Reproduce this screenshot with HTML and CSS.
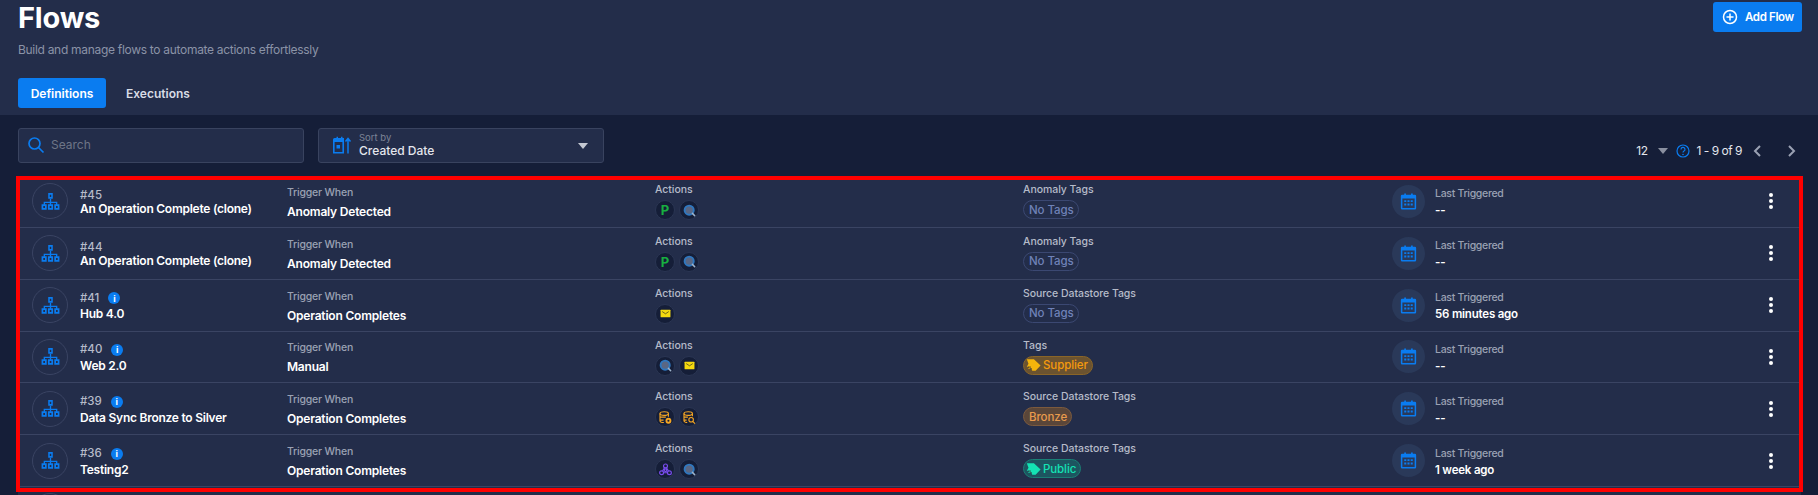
FILE: index.html
```html
<!DOCTYPE html>
<html lang="en">
<head>
    <meta charset="UTF-8">
    <meta name="viewport" content="width=device-width, initial-scale=1.0">
    <title>Flows</title>
    <link rel="stylesheet" href="styles.css">
</head>
<body>
    <svg class="sprites" width="0" height="0" aria-hidden="true">
        <symbol id="i-flow" viewBox="0 0 20 20">
            <path d="M10 7v4M3.500 14v-3h13v3M10 11v3" fill="none" stroke="currentColor" stroke-width="1.400"/>
            <path fill-rule="evenodd" d="M7.600 1h4.800v6H7.600zM9.200 2.800v2.400h1.600V2.800zM0.600 13h5.400v5.600H0.600zM2.400 14.800v2h1.800v-2zM7.300 13h5.400v5.600H7.300zM9.100 14.800v2h1.800v-2zM14 13h5.400v5.600H14zM15.800 14.800v2h1.800v-2z" fill="currentColor"/>
        </symbol>
        <symbol id="i-cal" viewBox="0 0 20 20">
            <path fill-rule="evenodd" d="M5 0.500h2V2h6V0.500h2V2h2.500A1.500 1.500 0 0 1 19 3.500V18a1.500 1.500 0 0 1-1.500 1.500h-15A1.500 1.500 0 0 1 1 18V3.500A1.500 1.500 0 0 1 2.500 2H5zM2.800 6.500V17.700h14.400V6.500z" fill="currentColor"/>
            <path d="M5 8.500h2.400v2.200H5zM8.800 8.500h2.400v2.200H8.800zM12.600 8.500H15v2.200h-2.400zM5 12.400h2.400v2.200H5zM8.800 12.400h2.400v2.200H8.800zM12.600 12.400H15v2.200h-2.400z" fill="currentColor"/>
        </symbol>
        <symbol id="i-lens" viewBox="0 0 20 20">
            <circle cx="9.500" cy="9.500" r="7" fill="#5a6784" stroke="#2f78c0" stroke-width="3"/>
            <path d="M14.500 14.500l3.500 3.500" stroke="#9fb4cc" stroke-width="2.400" stroke-linecap="round"/>
        </symbol>
        <symbol id="i-mail" viewBox="0 0 20 20">
            <rect x="1" y="3" width="18" height="14" rx="1" fill="#f4d90f"/>
            <path d="M4 6.500l6 4 6-4" fill="none" stroke="#3b3a20" stroke-width="1.300"/>
        </symbol>
        <symbol id="i-db-eye" viewBox="0 0 20 20">
            <g fill="none" stroke="#f5a623" stroke-width="1.700">
                <ellipse cx="8" cy="4" rx="6.500" ry="2.800"/>
                <path d="M1.500 4v11c0 1.500 3 2.800 6 2.800M14.500 4v5M1.500 9.500h9M1.500 14h5.500"/>
            </g>
            <circle cx="14.500" cy="15" r="4.500" fill="#f5a623"/>
            <circle cx="14.500" cy="15" r="1.600" fill="#151e38"/>
        </symbol>
        <symbol id="i-db-lens" viewBox="0 0 20 20">
            <g fill="none" stroke="#f5a623" stroke-width="1.700">
                <ellipse cx="8" cy="4" rx="6.500" ry="2.800"/>
                <path d="M1.500 4v11c0 1.500 3 2.800 5 2.800M14.500 4v4M1.500 9.500h6M1.500 14h4"/>
                <circle cx="12.500" cy="13.500" r="3.500"/>
                <path d="M15 16l3.500 3.500"/>
            </g>
        </symbol>
        <symbol id="i-tri" viewBox="0 0 20 20">
            <g fill="none" stroke="#7a4df0" stroke-width="1.800">
                <circle cx="10" cy="4.500" r="3"/>
                <circle cx="4" cy="15" r="3"/>
                <circle cx="16" cy="15" r="3"/>
                <path d="M8.500 7.200L5.500 12.400M11.500 7.200l3 5.200M7 15h6"/>
                <circle cx="10" cy="11" r="2"/>
            </g>
        </symbol>
        <symbol id="i-tag" viewBox="1 2 18 16">
            <path d="M2 3h8.500l8 7.500-6 6.500H8.500l-1-2.500H3.500l1.500-2.500H2l2-3.500-2-5.500z" fill="currentColor"/>
            <path d="M3.500 12.500h3.500M5.500 14.500H8" stroke="#3a3a3a" stroke-width="1"/>
        </symbol>
    </svg>

    <header class="top">
        <div class="top-head">
            <div>
                <h1>Flows</h1>
                <p class="sub">Build and manage flows to automate actions effortlessly</p>
            </div>
            <button class="add-btn">
                <svg width="16" height="16" viewBox="0 0 16 16"><circle cx="8" cy="8" r="6.500" fill="none" stroke="#fff" stroke-width="1.500"/><path d="M8 4.500v7M4.500 8h7" stroke="#fff" stroke-width="1.500"/></svg>
                Add Flow
            </button>
        </div>
        <nav class="tabs">
            <a class="tab active">Definitions</a>
            <a class="tab">Executions</a>
        </nav>
    </header>

    <main class="content">
        <div class="toolbar">
            <div class="field search">
                <svg width="18" height="18" viewBox="0 0 18 18"><circle cx="7.500" cy="7.500" r="5.500" fill="none" stroke="#0a7cf0" stroke-width="1.700"/><path d="M11.500 11.500l5 5" stroke="#0a7cf0" stroke-width="1.700"/></svg>
                <span class="placeholder">Search</span>
            </div>
            <div class="field sort">
                <svg width="20" height="20" viewBox="0 0 20 20"><path fill-rule="evenodd" d="M3 2h1.500V.8h1.500V2h3V.8h1.500V2H12v15.500H1V3.500A1.500 1.500 0 0 1 2.500 2zM2.600 6v10h7.800V6z" fill="#0a7cf0"/><path d="M4.500 9h3.500v3.500H4.500z" fill="#0a7cf0"/><path d="M16 17.500V3M13.500 5.500L16 2.500l2.500 3" fill="none" stroke="#0a7cf0" stroke-width="1.500"/></svg>
                <div class="sort-text">
                    <span class="sort-label">Sort by</span>
                    <span class="sort-value">Created Date</span>
                </div>
                <span class="caret"></span>
            </div>
            <div class="pager">
                <span>12</span>
                <span class="caret small"></span>
                <svg class="help" width="14" height="14" viewBox="0 0 14 14"><circle cx="7" cy="7" r="6" fill="none" stroke="#0a7cf0" stroke-width="1.200"/><path d="M5 5.400a2 2 0 1 1 3 1.700c-.7.400-1 .800-1 1.500" fill="none" stroke="#0a7cf0" stroke-width="1.200"/><circle cx="7" cy="10.500" r=".8" fill="#0a7cf0"/></svg>
                <span class="count">1 - 9 of 9</span>
                <svg class="chev" width="10" height="14" viewBox="0 0 10 14"><path d="M8 2L3 7l5 5" fill="none" stroke="#9aa1b3" stroke-width="2"/></svg>
                <svg class="chev next" width="10" height="14" viewBox="0 0 10 14"><path d="M2 2l5 5-5 5" fill="none" stroke="#9aa1b3" stroke-width="2"/></svg>
            </div>
        </div>

        <section class="list">
            <article class="row">
                <div class="avatar"><svg width="19" height="19"><use href="#i-flow"/></svg></div>
                <div class="name"><div class="id">#45</div><div class="title">An Operation Complete (clone)</div></div>
                <div class="cell"><div class="label">Trigger When</div><div class="value">Anomaly Detected</div></div>
                <div class="cell top-cell"><div class="label light">Actions</div><div class="icons"><span class="act pd">P</span><span class="act"><svg width="13" height="13"><use href="#i-lens"/></svg></span></div></div>
                <div class="cell top-cell"><div class="label light">Anomaly Tags</div><span class="chip none">No Tags</span></div>
                <div class="last"><div class="cal"><svg width="17" height="17"><use href="#i-cal"/></svg></div><div class="cell"><div class="label">Last Triggered</div><div class="value">--</div></div></div>
                <div class="kebab"><i></i><i></i><i></i></div>
            </article>
            <article class="row">
                <div class="avatar"><svg width="19" height="19"><use href="#i-flow"/></svg></div>
                <div class="name"><div class="id">#44</div><div class="title">An Operation Complete (clone)</div></div>
                <div class="cell"><div class="label">Trigger When</div><div class="value">Anomaly Detected</div></div>
                <div class="cell top-cell"><div class="label light">Actions</div><div class="icons"><span class="act pd">P</span><span class="act"><svg width="13" height="13"><use href="#i-lens"/></svg></span></div></div>
                <div class="cell top-cell"><div class="label light">Anomaly Tags</div><span class="chip none">No Tags</span></div>
                <div class="last"><div class="cal"><svg width="17" height="17"><use href="#i-cal"/></svg></div><div class="cell"><div class="label">Last Triggered</div><div class="value">--</div></div></div>
                <div class="kebab"><i></i><i></i><i></i></div>
            </article>
            <article class="row">
                <div class="avatar"><svg width="19" height="19"><use href="#i-flow"/></svg></div>
                <div class="name info"><div class="id">#41 <span class="dot">i</span></div><div class="title">Hub 4.0</div></div>
                <div class="cell"><div class="label">Trigger When</div><div class="value">Operation Completes</div></div>
                <div class="cell top-cell"><div class="label light">Actions</div><div class="icons"><span class="act"><svg width="11" height="11"><use href="#i-mail"/></svg></span></div></div>
                <div class="cell top-cell"><div class="label light">Source Datastore Tags</div><span class="chip none">No Tags</span></div>
                <div class="last"><div class="cal"><svg width="17" height="17"><use href="#i-cal"/></svg></div><div class="cell"><div class="label">Last Triggered</div><div class="value">56 minutes ago</div></div></div>
                <div class="kebab"><i></i><i></i><i></i></div>
            </article>
            <article class="row">
                <div class="avatar"><svg width="19" height="19"><use href="#i-flow"/></svg></div>
                <div class="name info"><div class="id">#40 <span class="dot">i</span></div><div class="title">Web 2.0</div></div>
                <div class="cell"><div class="label">Trigger When</div><div class="value">Manual</div></div>
                <div class="cell top-cell"><div class="label light">Actions</div><div class="icons"><span class="act"><svg width="13" height="13"><use href="#i-lens"/></svg></span><span class="act"><svg width="11" height="11"><use href="#i-mail"/></svg></span></div></div>
                <div class="cell top-cell"><div class="label light">Tags</div><span class="chip supplier"><svg width="15" height="14"><use href="#i-tag"/></svg>Supplier</span></div>
                <div class="last"><div class="cal"><svg width="17" height="17"><use href="#i-cal"/></svg></div><div class="cell"><div class="label">Last Triggered</div><div class="value">--</div></div></div>
                <div class="kebab"><i></i><i></i><i></i></div>
            </article>
            <article class="row">
                <div class="avatar"><svg width="19" height="19"><use href="#i-flow"/></svg></div>
                <div class="name info"><div class="id">#39 <span class="dot">i</span></div><div class="title">Data Sync Bronze to Silver</div></div>
                <div class="cell"><div class="label">Trigger When</div><div class="value">Operation Completes</div></div>
                <div class="cell top-cell"><div class="label light">Actions</div><div class="icons"><span class="act"><svg width="13" height="13"><use href="#i-db-eye"/></svg></span><span class="act"><svg width="13" height="13"><use href="#i-db-lens"/></svg></span></div></div>
                <div class="cell top-cell"><div class="label light">Source Datastore Tags</div><span class="chip bronze">Bronze</span></div>
                <div class="last"><div class="cal"><svg width="17" height="17"><use href="#i-cal"/></svg></div><div class="cell"><div class="label">Last Triggered</div><div class="value">--</div></div></div>
                <div class="kebab"><i></i><i></i><i></i></div>
            </article>
            <article class="row">
                <div class="avatar"><svg width="19" height="19"><use href="#i-flow"/></svg></div>
                <div class="name info"><div class="id">#36 <span class="dot">i</span></div><div class="title">Testing2</div></div>
                <div class="cell"><div class="label">Trigger When</div><div class="value">Operation Completes</div></div>
                <div class="cell top-cell"><div class="label light">Actions</div><div class="icons"><span class="act"><svg width="13" height="13"><use href="#i-tri"/></svg></span><span class="act"><svg width="13" height="13"><use href="#i-lens"/></svg></span></div></div>
                <div class="cell top-cell"><div class="label light">Source Datastore Tags</div><span class="chip public"><svg width="15" height="14"><use href="#i-tag"/></svg>Public</span></div>
                <div class="last"><div class="cal"><svg width="17" height="17"><use href="#i-cal"/></svg></div><div class="cell"><div class="label">Last Triggered</div><div class="value">1 week ago</div></div></div>
                <div class="kebab"><i></i><i></i><i></i></div>
            </article>
            <article class="row">
                <div class="avatar"></div>
            </article>
        </section>
    </main>
</body>
</html>
```

FILE: styles.css
```css
*, *::after {
    box-sizing: border-box;
}
html, body {
    margin: 0;
    height: 495px;
    overflow: hidden;
}
body {
    font-family: Inter, "Liberation Sans", sans-serif;
    background-color: #151e38;
    color: #fff;
}
.sprites {
    position: absolute;
}

/* header */
.top {
    height: 115px;
    padding: 0 16px 0 18px;
    background-color: #232d4a;
}
.top-head {
    display: flex;
    justify-content: space-between;
    align-items: flex-start;
    height: 78px;
}
h1 {
    margin: 0;
    font-size: 29px;
    line-height: 36px;
    font-weight: 700;
    letter-spacing: -0.2px;
}
.sub {
    margin: 6px 0 0;
    font-size: 12px;
    line-height: 16px;
    color: #8b93a7;
    letter-spacing: -0.3px;
}
.add-btn {
    display: flex;
    align-items: center;
    gap: 7px;
    width: 89px;
    height: 30px;
    margin-top: 2px;
    padding: 0 0 0 9px;
    border: none;
    border-radius: 3px;
    background-color: #0a7cf0;
    color: #fff;
    font-family: inherit;
    font-size: 11.500px;
    font-weight: 600;
    letter-spacing: -0.35px;
    white-space: nowrap;
}
.tabs {
    display: flex;
    gap: 20px;
}
.tab {
    display: flex;
    align-items: center;
    height: 30px;
    font-size: 12px;
    font-weight: 600;
    color: #d8dce5;
}
.tab.active {
    width: 88px;
    justify-content: center;
    border-radius: 3px;
    background-color: #0a7cf0;
    color: #fff;
}

/* toolbar */
.content {
    height: 380px;
    overflow: hidden;
    padding: 13px 17px 0 18px;
}
.toolbar {
    display: flex;
    align-items: center;
    gap: 14px;
    height: 35px;
    margin-bottom: 13px;
}
.field {
    display: flex;
    align-items: center;
    width: 286px;
    height: 35px;
    border: 1px solid #39435f;
    border-radius: 3px;
    background-color: #232d4a;
}
.search {
    gap: 6px;
    padding: 0 0 2px 8px;
}
.placeholder {
    font-size: 12px;
    color: #6e7587;
}
.sort {
    gap: 7px;
    padding: 0 15px 0 13px;
}
.sort-text {
    display: flex;
    flex-direction: column;
    flex: 1;
}
.sort-label {
    font-size: 9.500px;
    line-height: 11px;
    color: #7d8497;
}
.sort-value {
    font-size: 12px;
    line-height: 16px;
    font-weight: 500;
    color: #e3e6ed;
}
.caret {
    width: 0;
    height: 0;
    border-left: 5px solid transparent;
    border-right: 5px solid transparent;
    border-top: 6px solid #c4c8d2;
}
.caret.small {
    border-top-color: #8a90a0;
}
.pager {
    display: flex;
    align-items: center;
    gap: 10px;
    margin-left: auto;
    padding: 10px 4px 0 0;
    font-size: 12px;
    letter-spacing: -0.4px;
    color: #e3e6ed;
}
.help {
    margin-left: -2px;
}
.count {
    margin-left: -3px;
    letter-spacing: -0.5px;
}
.chev.next {
    margin-left: 15px;
}

/* flow list */
.list {
    position: relative;
}
/* red highlight box round the rows */
.list::after {
    content: "";
    position: absolute;
    top: 0;
    left: -2px;
    right: -2px;
    height: 316px;
    border: 4px solid #f00;
    pointer-events: none;
}
.row {
    display: grid;
    grid-template-columns: 48px 207px 368px 368px 369px 1fr 30px;
    align-items: center;
    height: 51.850px;
    padding: 0 15px 0 14px;
    border-bottom: 1px solid #3a4463;
    background-color: #232d4a;
}
.row:last-child {
    align-items: flex-start;
    padding-top: 6px;
    border-bottom: none;
}
.avatar {
    display: flex;
    align-items: center;
    justify-content: center;
    width: 36px;
    height: 36px;
    border: 1px solid #3a4463;
    border-radius: 50%;
    color: #0a7cf0;
}
.name {
    padding-top: 2px;
}
.id {
    display: flex;
    align-items: center;
    gap: 9px;
    font-size: 11.500px;
    line-height: 13px;
    font-weight: 500;
    color: #b6bbc9;
}
.title {
    font-size: 12px;
    line-height: 14px;
    font-weight: 600;
    letter-spacing: -0.25px;
    white-space: nowrap;
}
.info .id {
    height: 14px;
    margin-bottom: 2px;
}
.dot {
    display: flex;
    align-items: center;
    justify-content: center;
    width: 12px;
    height: 12px;
    border-radius: 50%;
    background-color: #0a7cf0;
    color: #fff;
    font-size: 9px;
    font-weight: 700;
}
.cell {
    padding-top: 2px;
}
.label {
    font-size: 10.500px;
    line-height: 14px;
    font-weight: 500;
    letter-spacing: -0.2px;
    color: #9aa1b3;
}
.label.light {
    letter-spacing: -0.05px;
    color: #b6bbc9;
}
.value {
    margin-top: 5px;
    font-size: 12px;
    line-height: 14px;
    font-weight: 600;
    letter-spacing: -0.2px;
}
.top-cell {
    align-self: start;
    padding-top: 7px;
}
.icons {
    display: flex;
    gap: 4px;
    margin-top: 3px;
}
.act {
    display: flex;
    align-items: center;
    justify-content: center;
    width: 20px;
    height: 20px;
    border: 1px solid #2a3553;
    border-radius: 50%;
    background-color: #151e38;
}
.pd {
    color: #18b040;
    font-size: 13px;
    font-weight: 700;
}
.chip {
    display: inline-flex;
    align-items: center;
    gap: 2px;
    height: 19px;
    margin-top: 3px;
    padding: 0 4px 0 5px;
    border: 1px solid;
    border-radius: 10px;
    font-size: 11.500px;
    font-weight: 500;
    letter-spacing: -0.1px;
}
.chip.none {
    border-color: #3b4872;
    color: #6f82b8;
}
.chip.supplier {
    padding-left: 2px;
    border-color: #8a6527;
    background-color: #6b5330;
    color: #f59a0c;
}
.chip.supplier svg {
    color: #f5b50c;
}
.chip.bronze {
    border-color: #7c5a3d;
    background-color: #5a4639;
    color: #e99b4d;
}
.chip.public {
    padding-left: 2px;
    border-color: #1a7f75;
    background-color: #1d5560;
    color: #14e3b4;
}
.last {
    display: flex;
    align-items: center;
    gap: 10px;
}
.last .cell {
    padding-top: 2px;
}
.last .label {
    letter-spacing: -0.3px;
}
.last .value {
    margin-top: 2px;
    font-size: 11.500px;
    letter-spacing: -0.2px;
}
.cal {
    display: flex;
    align-items: center;
    justify-content: center;
    width: 33px;
    height: 33px;
    border-radius: 50%;
    background-color: #2a3959;
    color: #0a7cf0;
}
.kebab {
    display: flex;
    flex-direction: column;
    align-items: center;
    gap: 2px;
}
.kebab i {
    width: 4px;
    height: 4px;
    border-radius: 50%;
    background-color: #fff;
}
```
